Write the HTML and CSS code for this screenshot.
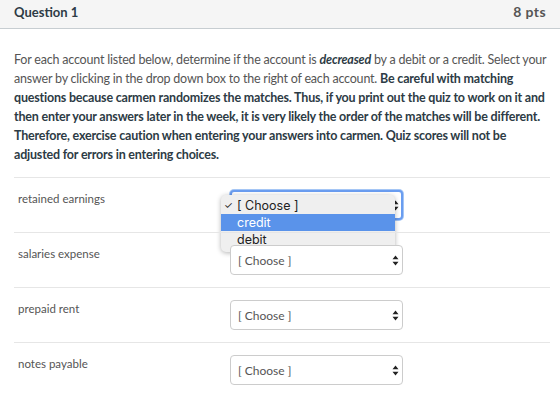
FILE: index.html
```html
<!DOCTYPE html>
<html lang="en">
<head>
  <meta charset="UTF-8">
  <title>Question 1</title>
  <link rel="stylesheet" href="styles.css">
</head>
<body>
  <div class="question">
    <div class="question-header">
      <span class="question-name">Question 1</span>
      <span class="question-points">8 pts</span>
    </div>

    <div class="question-text">
      For each account listed below, determine if the account is <b><i>decreased</i></b> by a debit or a credit. Select your<br>
      answer by clicking in the drop down box to the right of each account. <b>Be careful with matching<br>
      questions because carmen randomizes the matches. Thus, if you print out the quiz to work on it and<br>
      then enter your answers later in the week, it is very likely the order of the matches will be different.<br>
      Therefore, exercise caution when entering your answers into carmen. Quiz scores will not be<br>
      adjusted for errors in entering choices.</b>
    </div>

    <div class="answers">
      <div class="answer-row">
        <div class="answer-label">retained earnings</div>
        <div class="select-wrap focused">
          <select>
            <option>[ Choose ]</option>
            <option>credit</option>
            <option>debit</option>
          </select>
          <svg class="arrows" width="7" height="11" viewBox="0 0 7 11"><path d="M3.5 0.5 L6.5 4.2 L0.5 4.2 Z M3.5 10.5 L6.5 6.8 L0.5 6.8 Z" fill="#222"/></svg>
        </div>
        <!-- open option list of the first select -->
        <ul class="option-menu">
          <li><span class="check">&#10003;</span>[ Choose ]</li>
          <li class="hover">credit</li>
          <li>debit</li>
        </ul>
      </div>

      <div class="answer-row">
        <div class="answer-label">salaries expense</div>
        <div class="select-wrap">
          <select>
            <option>[ Choose ]</option>
            <option>credit</option>
            <option>debit</option>
          </select>
          <svg class="arrows" width="7" height="11" viewBox="0 0 7 11"><path d="M3.5 0.5 L6.5 4.2 L0.5 4.2 Z M3.5 10.5 L6.5 6.8 L0.5 6.8 Z" fill="#222"/></svg>
        </div>
      </div>

      <div class="answer-row">
        <div class="answer-label">prepaid rent</div>
        <div class="select-wrap">
          <select>
            <option>[ Choose ]</option>
            <option>credit</option>
            <option>debit</option>
          </select>
          <svg class="arrows" width="7" height="11" viewBox="0 0 7 11"><path d="M3.5 0.5 L6.5 4.2 L0.5 4.2 Z M3.5 10.5 L6.5 6.8 L0.5 6.8 Z" fill="#222"/></svg>
        </div>
      </div>

      <div class="answer-row">
        <div class="answer-label">notes payable</div>
        <div class="select-wrap">
          <select>
            <option>[ Choose ]</option>
            <option>credit</option>
            <option>debit</option>
          </select>
          <svg class="arrows" width="7" height="11" viewBox="0 0 7 11"><path d="M3.5 0.5 L6.5 4.2 L0.5 4.2 Z M3.5 10.5 L6.5 6.8 L0.5 6.8 Z" fill="#222"/></svg>
        </div>
      </div>
    </div>
  </div>
</body>
</html>
```

FILE: styles.css
```css
body {
  margin: 0;
  font-family: Lato, 'Open Sans', sans-serif;
  background: white;
  color: #555;
}

.question-header {
  display: flex;
  justify-content: space-between;
  align-items: center;
  height: 29px;
  padding: 0 14px 5px;
  box-sizing: border-box;
  background: #f5f5f5;
  border-bottom: 1px solid #c7cdd1;
}

.question-name {
  font-size: 13px;
  font-weight: bold;
  color: #2d3b45;
}

.question-points {
  font-size: 14px;
  font-weight: bold;
  letter-spacing: 0.4px;
  color: #555;
}

.question-text {
  padding: 21px 14px 0;
  font-size: 12.5px;
  letter-spacing: -0.2px;
  line-height: 19px;
  white-space: nowrap;
  color: #555;
}

.question-text b {
  color: #2d3b45;
}

.answers {
  margin: 13px 10px 0 14px;
}

.answer-row {
  position: relative;
  display: flex;
  padding: 12px 0;
  border-top: 1px solid #e6e6e6;
}

.answer-label {
  width: 212px;
  padding: 2px 0 0 4px;
  font-size: 11.5px;
  color: #555;
}

.select-wrap {
  position: relative;
  width: 173px;
  height: 30px;
}

.select-wrap select {
  appearance: none;
  -webkit-appearance: none;
  width: 100%;
  height: 100%;
  padding: 0 20px 0 7px;
  border: 1px solid #ccc;
  border-radius: 4px;
  background: white;
  font-family: Lato, 'Open Sans', sans-serif;
  font-size: 12px;
  color: #555;
  outline: none;
}

.select-wrap.focused select {
  border: 2px solid #6a9df0;
  box-shadow: 0 0 0 1px #a5c6f5;
}

.arrows {
  position: absolute;
  right: 4px;
  top: 10px;
}

.option-menu {
  position: absolute;
  left: 207px;
  top: 17px;
  width: 174px;
  margin: 0;
  padding: 2px 0 4px;
  list-style: none;
  background: #efefef;
  border-radius: 5px;
  box-shadow: 0 1px 5px rgba(0, 0, 0, 0.3);
  font-family: Inter, 'Liberation Sans', sans-serif;
  font-size: 12.5px;
  color: #222;
}

.option-menu li {
  position: relative;
  height: 17px;
  line-height: 17px;
  padding-left: 16px;
}

.option-menu li.hover {
  background: #5a93ea;
  color: white;
}

.option-menu .check {
  position: absolute;
  left: 3px;
  top: 0;
  font-size: 10px;
}
```
